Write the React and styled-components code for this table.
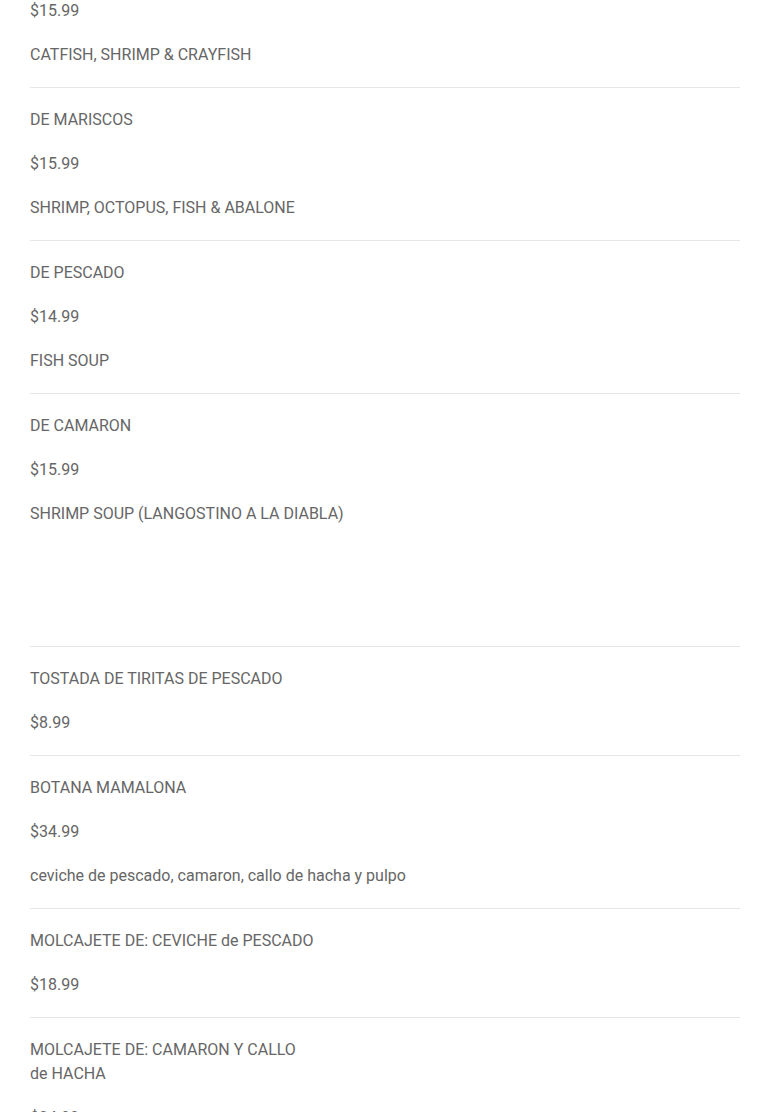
import React from "react";
import styled, { createGlobalStyle } from "styled-components";

const Global = createGlobalStyle`
    body {
        margin: 0;
        background: #fff;
        font-family: Roboto, "Noto Sans", Arial, sans-serif;
    }
`

const Lista = styled.div`
    display: flex;
    flex-direction: column;
    padding: 0 30px;
    margin-top: -1px;
`

const Item = styled.div`
    display: flex;
    flex-direction: column;
    gap: 20px;
    padding: ${props => props.primeiro ? "0 0 20px" : "20px 0"};
    border-top: ${props => props.primeiro ? "none" : "1px solid #e6e6e6"};
`

const Texto = styled.p`
    margin: 0;
    font-size: 16px;
    line-height: 24px;
    color: #666;
    white-space: pre-line;
`

const Espaco = styled.div`
    height: 80px;
`

const itens = [
    { preco: "$15.99", desc: "CATFISH, SHRIMP & CRAYFISH" },
    { nome: "DE MARISCOS", preco: "$15.99", desc: "SHRIMP, OCTOPUS, FISH & ABALONE" },
    { nome: "DE PESCADO", preco: "$14.99", desc: "FISH SOUP" },
    { nome: "DE CAMARON", preco: "$15.99", desc: "SHRIMP SOUP (LANGOSTINO A LA DIABLA)", espaco: true },
    { nome: "TOSTADA DE TIRITAS DE PESCADO", preco: "$8.99" },
    { nome: "BOTANA MAMALONA", preco: "$34.99", desc: "ceviche de pescado, camaron, callo de hacha y pulpo" },
    { nome: "MOLCAJETE DE: CEVICHE de PESCADO", preco: "$18.99" },
    { nome: "MOLCAJETE DE: CAMARON Y CALLO\nde HACHA", preco: "$24.99" },
]

export default class App extends React.Component {
    render () {
        return (
            <>
                <Global />
                <Lista>
                    {itens.map((item, i) => (
                        <Item key={i} primeiro={i === 0}>
                            {item.nome && <Texto>{item.nome}</Texto>}
                            <Texto>{item.preco}</Texto>
                            {item.desc && <Texto>{item.desc}</Texto>}
                            {item.espaco && <Espaco />}
                        </Item>
                    ))}
                </Lista>
            </>
        )
    }
}
